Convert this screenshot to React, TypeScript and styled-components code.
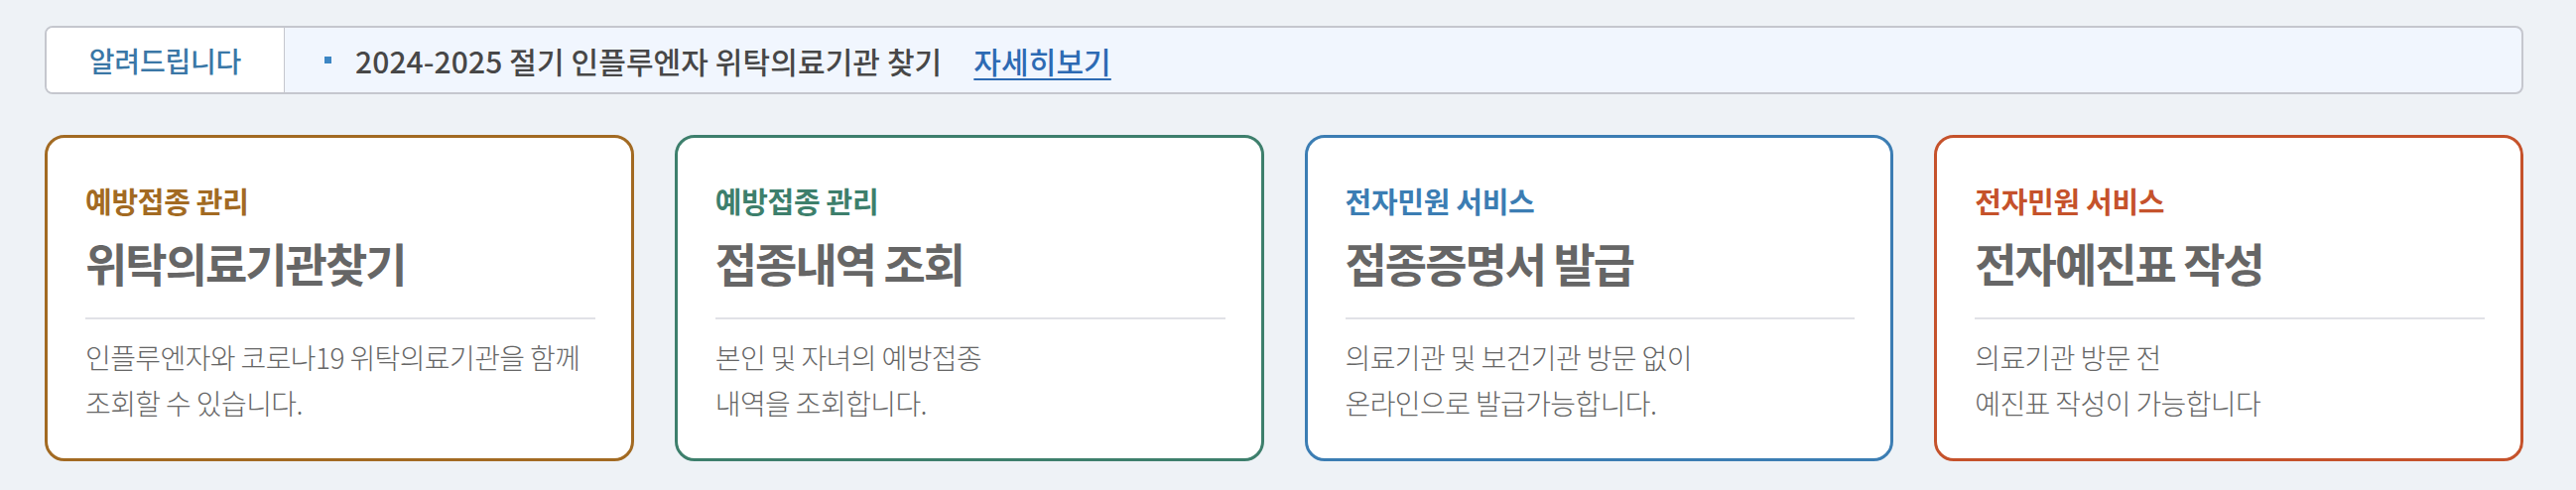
import React from "react";
import styled, { createGlobalStyle } from "styled-components";

const GlobalStyle = createGlobalStyle`
  html, body {
    margin: 0;
    padding: 0;
    background: #eef2f6;
  }
  body {
    font-family: "Noto Sans CJK KR", "Noto Sans", sans-serif;
  }
`;

const Page = styled.div`
  padding: 26px 53px 29px 45px;
`;

const Notice = styled.div`
  display: flex;
  height: 65px;
  border: 2px solid #c5c7ce;
  border-radius: 8px;
  background: #f1f6fe;
  overflow: hidden;
`;

const NoticeLabel = styled.div`
  flex: 0 0 239px;
  display: flex;
  align-items: center;
  justify-content: center;
  background: #ffffff;
  border-right: 1px solid #c5c7ce;
  color: #3a77a6;
  font-size: 28px;
  font-weight: 500;
  letter-spacing: -0.2px;
`;

const NoticeBody = styled.div`
  display: flex;
  align-items: center;
  padding-left: 40px;
  color: #474747;
  font-size: 30px;
  font-weight: 500;
  letter-spacing: 0.1px;
`;

const Bullet = styled.span`
  width: 7px;
  height: 7px;
  background: #3d86c4;
  margin-right: 24px;
`;

const MoreLink = styled.a`
  margin-left: 32px;
  color: #2d6ab3;
  text-decoration: underline;
  text-decoration-thickness: 2px;
  text-underline-offset: 5px;
  cursor: pointer;
`;

const Cards = styled.div`
  display: grid;
  grid-template-columns: repeat(4, 1fr);
  gap: 41px;
  margin-top: 41px;
`;

const Card = styled.div<{ $tone: string }>`
  background: #ffffff;
  border: 3px solid ${(p) => p.$tone};
  border-radius: 20px;
  padding: 45px 36px 33px 38px;
  height: 329px;
  box-sizing: border-box;
`;

const Category = styled.div<{ $tone: string }>`
  color: ${(p) => p.$tone};
  font-size: 29px;
  font-weight: 700;
  line-height: 36px;
  letter-spacing: -0.3px;
`;

const Title = styled.h2`
  margin: 16px 0 0;
  color: #666666;
  font-size: 46px;
  font-weight: 700;
  line-height: 56px;
  letter-spacing: -2px;
`;

const Divider = styled.hr`
  margin: 28px 0 0;
  border: none;
  height: 2px;
  background: #e1e2e7;
`;

const Desc = styled.p`
  margin: 15px 0 0;
  color: #666666;
  font-size: 28px;
  font-weight: 300;
  line-height: 46px;
  letter-spacing: -0.6px;
`;

const services = [
  {
    tone: "#a26a22",
    category: "예방접종 관리",
    title: "위탁의료기관찾기",
    desc: ["인플루엔자와 코로나19 위탁의료기관을 함께", "조회할 수 있습니다."],
  },
  {
    tone: "#3d7f6c",
    category: "예방접종 관리",
    title: "접종내역 조회",
    desc: ["본인 및 자녀의 예방접종", "내역을 조회합니다."],
  },
  {
    tone: "#3b7db3",
    category: "전자민원 서비스",
    title: "접종증명서 발급",
    desc: ["의료기관 및 보건기관 방문 없이", "온라인으로 발급가능합니다."],
  },
  {
    tone: "#c5522b",
    category: "전자민원 서비스",
    title: "전자예진표 작성",
    desc: ["의료기관 방문 전", "예진표 작성이 가능합니다"],
  },
];

const App = () => {
  return (
    <>
      <GlobalStyle />
      <Page>
        <Notice>
          <NoticeLabel>알려드립니다</NoticeLabel>
          <NoticeBody>
            <Bullet />
            2024-2025 절기 인플루엔자 위탁의료기관 찾기
            <MoreLink>자세히보기</MoreLink>
          </NoticeBody>
        </Notice>
        <Cards>
          {services.map((s) => (
            <Card key={s.title} $tone={s.tone}>
              <Category $tone={s.tone}>{s.category}</Category>
              <Title>{s.title}</Title>
              <Divider />
              <Desc>
                {s.desc[0]}
                <br />
                {s.desc[1]}
              </Desc>
            </Card>
          ))}
        </Cards>
      </Page>
    </>
  );
};

export default App;
